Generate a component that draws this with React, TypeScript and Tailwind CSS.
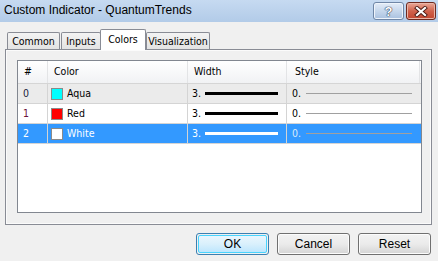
import React from "react";

const rows = [
  { n: "0", nColor: "text-[#1c1c3c]", swatch: "bg-[#00ffff]", name: "Aqua", bg: "bg-[#ebebeb]", sel: false },
  { n: "1", nColor: "text-[#6a1438]", swatch: "bg-[#ff0000]", name: "Red", bg: "bg-white", sel: false },
  { n: "2", nColor: "text-white", swatch: "bg-white", name: "White", bg: "bg-[#3399ff]", sel: true },
];

const dlgFont = "font-['DejaVu_Sans_Condensed','DejaVu_Sans',sans-serif] [font-stretch:condensed]";

function Tab({ label, w, selected, extra }: { label: string; w: string; selected?: boolean; extra?: string }) {
  if (selected) {
    return (
      <div
        className={`relative z-20 ${w} ${extra ?? ""} h-[21px] border border-b-0 border-[#898c95] rounded-t-[2px] bg-white flex items-start justify-center pt-[3px] text-[10.5px] leading-[13px] text-black ${dlgFont}`}
      >
        {label}
      </div>
    );
  }
  return (
    <div
      className={`relative z-10 ${w} ${extra ?? ""} h-[17px] mb-[1px] border border-b-0 border-[#898c95] rounded-t-[2px] bg-linear-to-b from-[#f3f3f3] to-[#e3e3e3] flex items-center justify-center pt-[1px] text-[10.5px] leading-[13px] text-black ${dlgFont}`}
    >
      {label}
    </div>
  );
}

function Btn({ label, def }: { label: string; def?: boolean }) {
  if (def) {
    return (
      <div className="w-[73px] h-[22px] rounded-[3px] border border-[#3c7fb1] p-px">
        <div className="w-full h-full rounded-[2px] border border-[#48d4fe] bg-linear-to-b from-[#eaf6fd] via-[#d9f0fc] to-[#bee6fd] flex items-center justify-center text-[12px] text-black">
          {label}
        </div>
      </div>
    );
  }
  return (
    <div className="w-[73px] h-[22px] rounded-[3px] border border-[#707070] bg-linear-to-b from-[#f2f2f2] via-[#ebebeb] to-[#d4d4d4] shadow-[inset_0_0_0_1px_#fcfcfc] flex items-center justify-center text-[12px] text-black">
      {label}
    </div>
  );
}

export default function App() {
  return (
    <div className="w-[438px] h-[261px] bg-[#f0f0f0] flex flex-col overflow-hidden font-['Liberation_Sans',Arial,sans-serif]">
      {/* Title bar */}
      <div className="h-[22px] flex items-start bg-linear-to-b from-[#c6daf1] to-[#b2cbe8] shrink-0">
        <span className="ml-[4px] mt-[3px] text-[12px] leading-[15px] text-black">Custom Indicator - QuantumTrends</span>
        <div className="ml-auto mt-[2px] mr-[2px] flex gap-[2px]">
          <div className="w-[31px] h-[18px] rounded-[3px] border border-[#6f86a6] bg-linear-to-b from-[#e3ecf7] via-[#c6d7ec] to-[#a9c1e0] shadow-[inset_0_0_0_1px_#eef4fb] flex items-center justify-center">
            <span className="text-[13px] leading-[13px] font-bold text-white [text-shadow:0_0_1px_#2a3a55,0_0_1px_#2a3a55,0_0_1px_#2a3a55]">?</span>
          </div>
          <div className="w-[30px] h-[18px] rounded-[3px] border border-[#6e2a20] bg-linear-to-b from-[#e9a898] via-[#d0624c] to-[#c2452f] shadow-[inset_0_0_0_1px_#eab5a7] flex items-center justify-center">
            <svg width="14" height="11" viewBox="0 0 14 11">
              <path d="M3 2 L11 9 M11 2 L3 9" stroke="#4a1a14" strokeWidth="4" strokeLinecap="square" />
              <path d="M3 2 L11 9 M11 2 L3 9" stroke="#ffffff" strokeWidth="2.2" strokeLinecap="square" />
            </svg>
          </div>
        </div>
      </div>

      {/* Tabs */}
      <div className="mt-[7px] h-[21px] flex items-end pl-[7px] relative z-10 shrink-0">
        <Tab label="Common" w="w-[53px]" />
        <Tab label="Inputs" w="w-[40px]" extra="ml-[1px]" />
        <Tab label="Colors" w="w-[46px]" selected extra="-ml-[1px]" />
        <Tab label="Visualization" w="w-[64px]" />
      </div>

      {/* Panel */}
      <div className="-mt-[1px] ml-[5px] w-[427px] h-[176px] border border-[#898c95] bg-[#f0f0f0] shadow-[inset_0_0_0_1px_#fbfbfb] pt-[10px] pl-[11px] shrink-0">
        <div className={`w-[405px] h-[153px] border border-[#828790] bg-white flex flex-col text-[10.5px] text-black ${dlgFont}`}>
          {/* Header */}
          <div className="h-[23px] flex border-b border-[#d5d5d5] bg-linear-to-b from-white to-[#f1f2f4] shrink-0">
            <div className="w-[30px] border-r border-[#e3e4e6] flex items-center pl-[6px]">#</div>
            <div className="w-[140px] border-r border-[#e3e4e6] flex items-center pl-[6px]">Color</div>
            <div className="w-[99px] border-r border-[#e3e4e6] flex items-center pl-[6px]">Width</div>
            <div className="w-[133px] border-r border-[#e3e4e6] flex items-center pl-[8px]">Style</div>
          </div>
          {rows.map((r) => (
            <div key={r.n} className={`h-[20px] flex border-b border-[#d4d4d4] shrink-0 ${r.bg}`}>
              <div className={`w-[30px] border-r border-[#d4d4d4] flex items-center pl-[5px] ${r.nColor}`}>{r.n}</div>
              <div className="w-[140px] border-r border-[#d4d4d4] flex items-center pl-[3px]">
                <div className={`w-[12px] h-[12px] border border-[#8a8a8a] ${r.swatch}`} />
                <span className={`ml-[4px] ${r.sel ? "text-white" : "text-black"}`}>{r.name}</span>
              </div>
              <div className="w-[99px] border-r border-[#d4d4d4] flex items-center pl-[4px]">
                <span className={r.sel ? "text-white" : "text-black"}>3.</span>
                <div className={`ml-[4px] w-[73px] h-[3px] ${r.sel ? "bg-white" : "bg-black"}`} />
              </div>
              <div className="w-[133px] flex items-center pl-[5px]">
                <span className={r.sel ? "text-[#dbe9f8]" : "text-black"}>0.</span>
                <div className="ml-[5px] w-[106px] h-px bg-[#a0a0a0]" />
              </div>
            </div>
          ))}
        </div>
      </div>

      {/* Buttons */}
      <div className="mt-[8px] flex justify-end gap-[8px] pr-[7px]">
        <Btn label="OK" def />
        <Btn label="Cancel" />
        <Btn label="Reset" />
      </div>
    </div>
  );
}
